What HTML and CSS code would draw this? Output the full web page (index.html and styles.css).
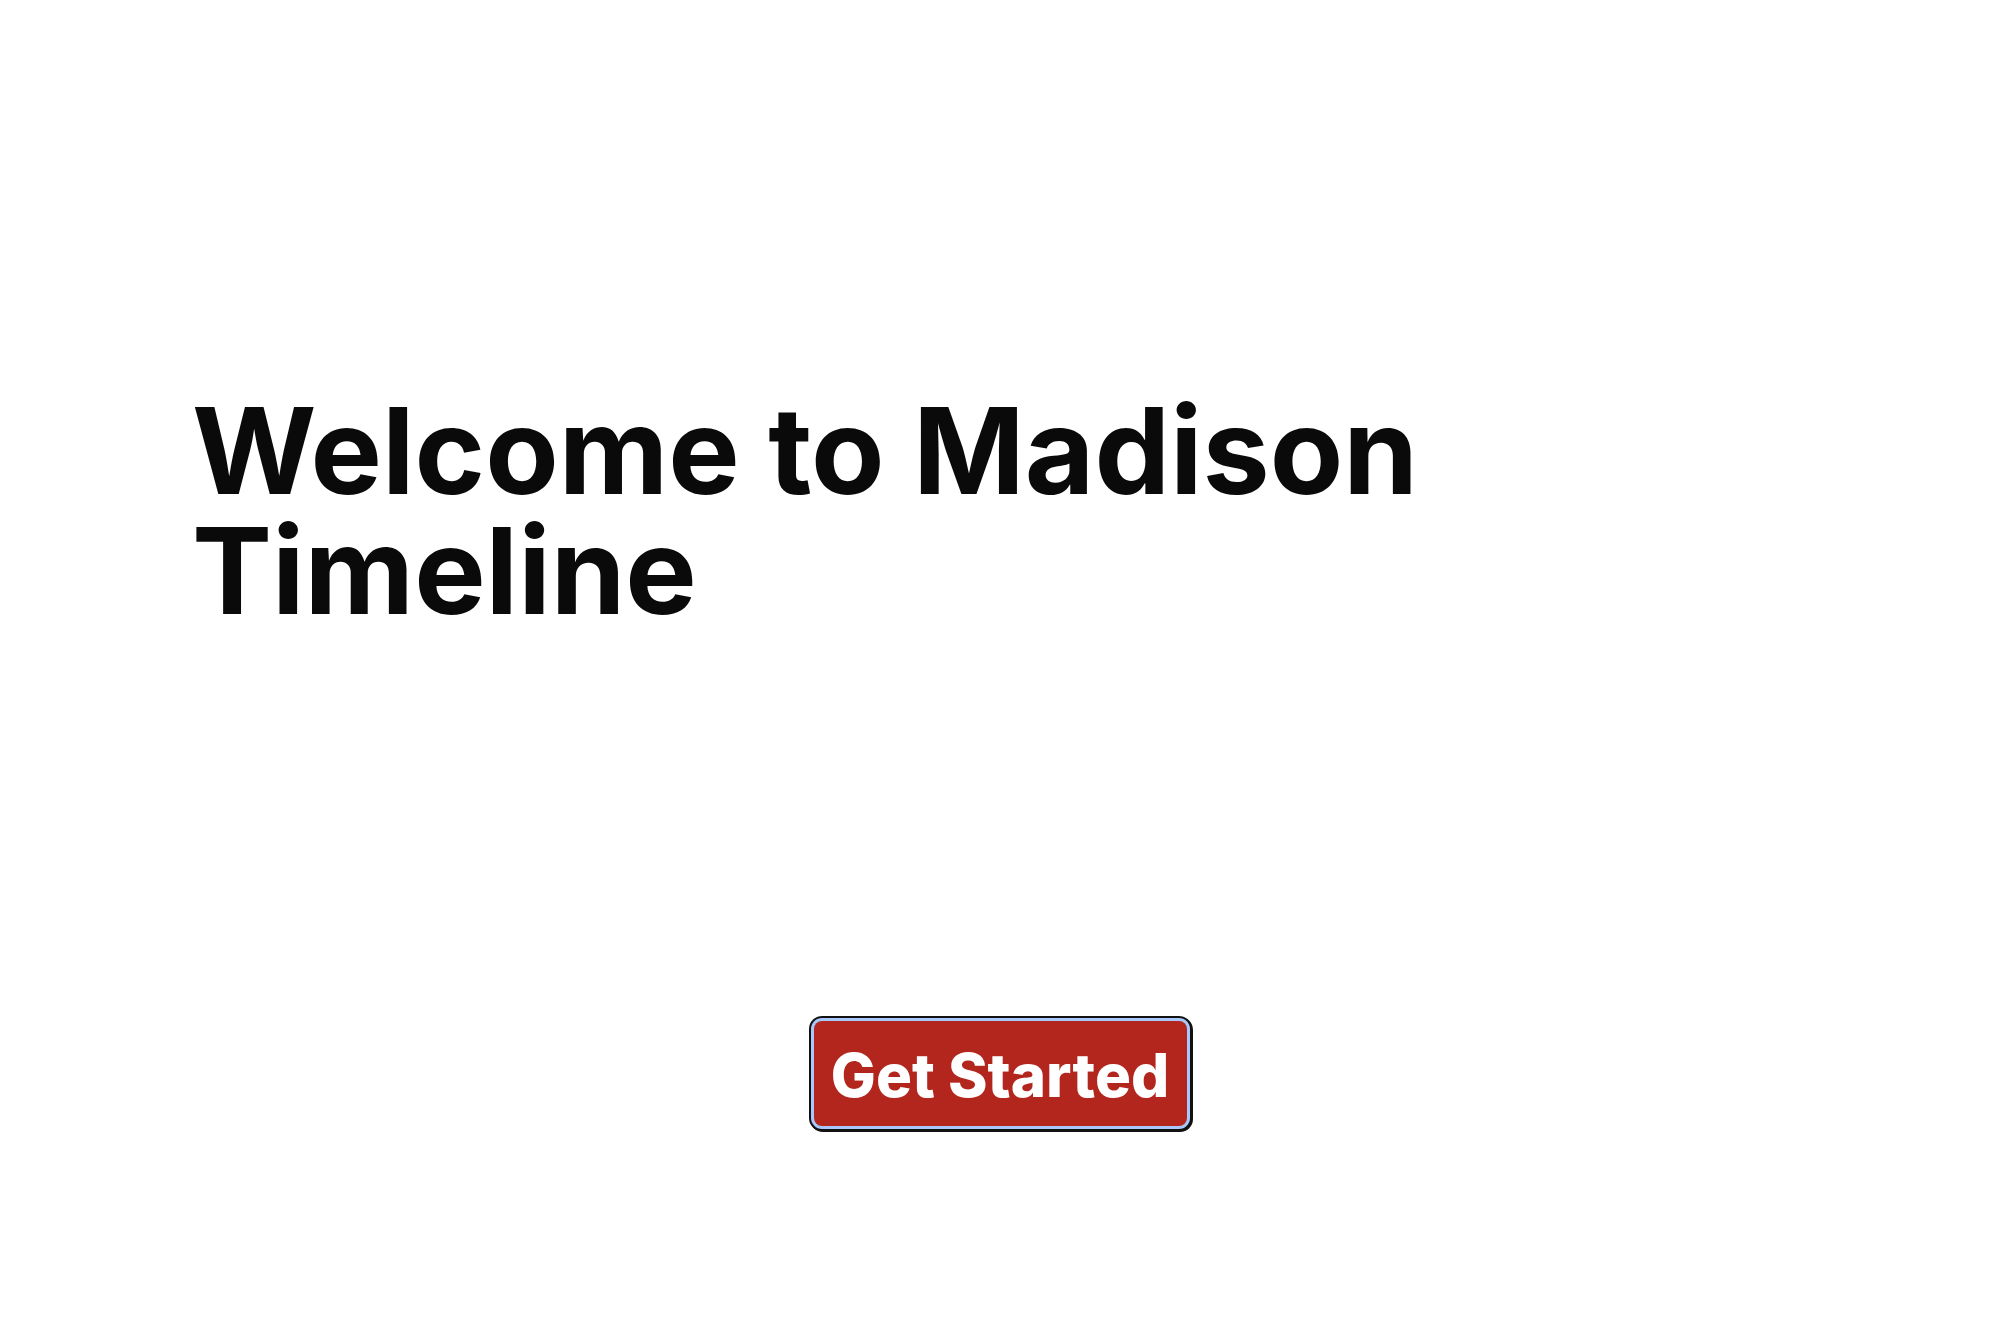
FILE: index.html
```html
<!DOCTYPE html>
<html lang="en">
<head>
<meta charset="utf-8">
<title>Welcome to Madison Timeline</title>
<link rel="stylesheet" href="styles.css">
</head>
<body>
<main class="page">
  <h1 class="title">Welcome to Madison<br>Timeline</h1>
  <div class="actions">
    <button class="cta" type="button">Get Started</button>
  </div>
</main>
</body>
</html>
```

FILE: styles.css
```css
html, body {
  margin: 0;
  padding: 0;
  background: #ffffff;
}
body {
  font-family: Inter, "Noto Sans", sans-serif;
}
.page {
  width: 2000px;
  height: 1320px;
  box-sizing: border-box;
  padding: 391px 0 0 192px;
  display: flex;
  flex-direction: column;
}
.title {
  margin: 0;
  font-size: 120px;
  line-height: 120px;
  font-weight: 700;
  color: #0a0a0a;
  letter-spacing: 0;
}
.actions {
  display: flex;
  justify-content: center;
  margin-left: -192px;
  margin-top: 390px;
}
.cta {
  font-family: Inter, "Noto Sans", sans-serif;
  font-size: 60px;
  line-height: 60px;
  font-weight: 800;
  color: #ffffff;
  background: #b3261e;
  border: none;
  border-radius: 8px;
  padding: 24px 0 21px;
  width: 373px;
  box-shadow: 0 0 0 3px #a8c7fa, 0 0 0 5px #111111, 1px 1px 0 5px #111111;
  cursor: pointer;
}
```
